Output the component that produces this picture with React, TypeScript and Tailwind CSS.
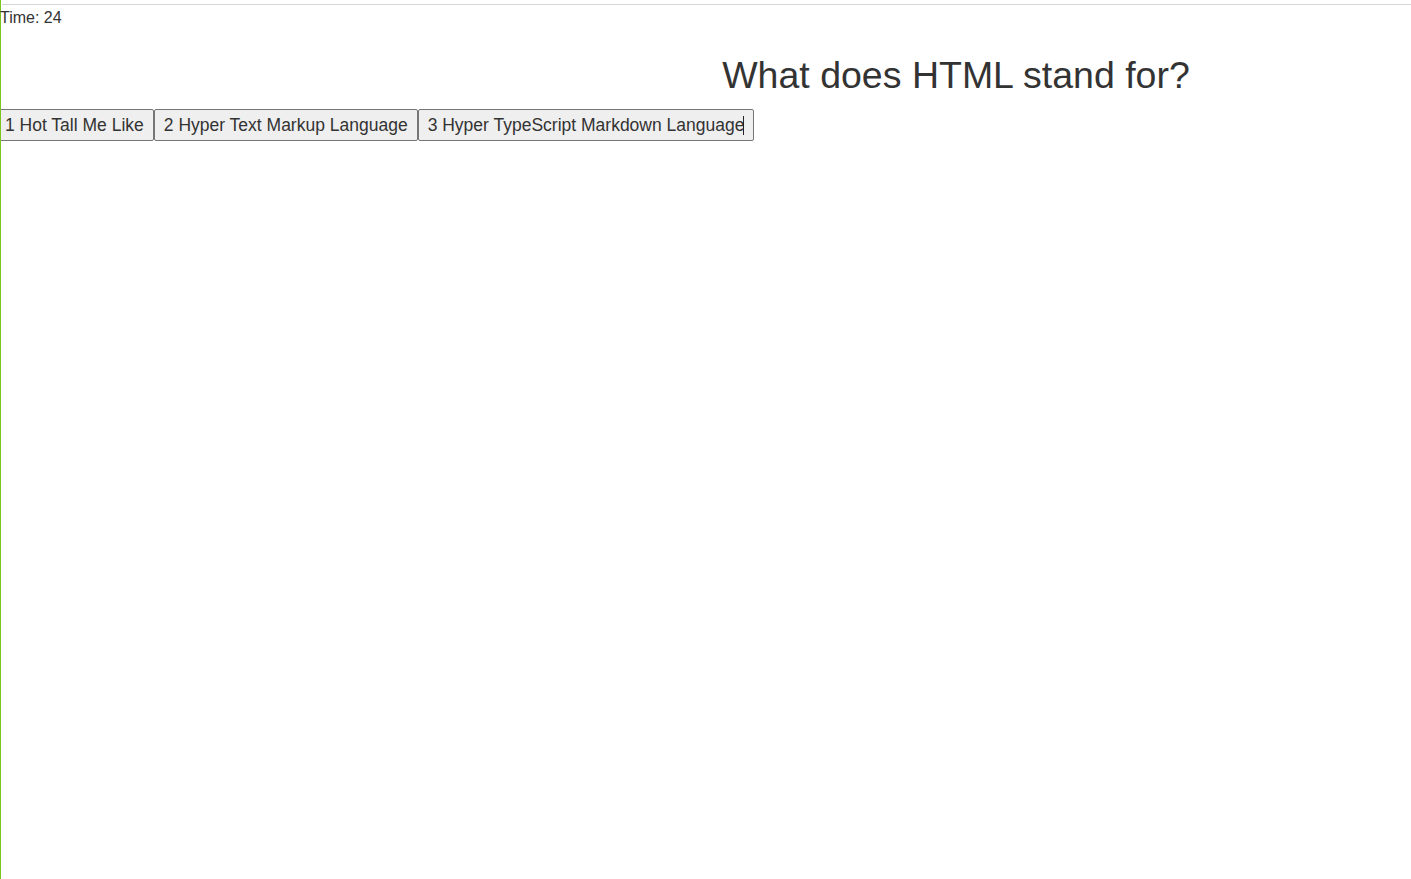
import React from "react";

const answers = ["1 Hot Tall Me Like", "2 Hyper Text Markup Language", "3 Hyper TypeScript Markdown Language"];

export default function App() {
  return (
    <div className="min-h-[879px] bg-white border-l border-[#7cc520] text-[#333333] font-['Liberation_Sans',Arial,sans-serif]">
      <div className="pt-1 pl-px">
        <div className="h-px bg-[#d6d6d6]" />
      </div>
      {/* timer */}
      <div className="text-[16px] leading-[18px] -ml-px pt-[4px]">Time: 24</div>

      {/* question */}
      <h1 className="pl-[500px] text-center text-[37.5px] leading-[42px] mt-[27px] mb-[13px]">What does HTML stand for?</h1>

      <div className="flex overflow-hidden">
        {answers.map((a, i) => (
          <button
            key={i}
            className="first:-ml-[6px] relative h-[32px] px-[9px] pt-px bg-[#efefef] border border-[#767676] rounded-[2px] text-[17.5px] leading-none text-[#333333] whitespace-nowrap"
          >
            {a}
            {i === 2 && <span className="absolute right-[9px] top-[6px] w-px h-[19px] bg-[#222]" />}
          </button>
        ))}
      </div>
    </div>
  );
}
